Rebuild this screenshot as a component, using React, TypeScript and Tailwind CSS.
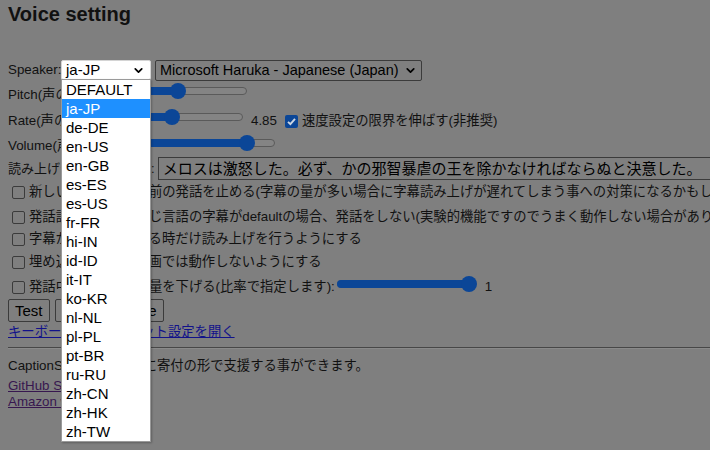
import { ChevronDown } from "lucide-react";

const FONT = "font-['Liberation_Sans','Noto_Sans_CJK_JP',sans-serif]";

const LANGS = [
  "DEFAULT",
  "ja-JP",
  "de-DE",
  "en-US",
  "en-GB",
  "es-ES",
  "es-US",
  "fr-FR",
  "hi-IN",
  "id-ID",
  "it-IT",
  "ko-KR",
  "nl-NL",
  "pl-PL",
  "pt-BR",
  "ru-RU",
  "zh-CN",
  "zh-HK",
  "zh-TW",
];

type SliderProps = {
  width: number;
  thumb: number;
  className?: string;
};

function Slider({ width, thumb, className = "" }: SliderProps) {
  return (
    <div className={`relative h-[16px] shrink-0 ${className}`} style={{ width }}>
      <div className="absolute inset-x-0 top-[4px] h-[8px] rounded-full border border-[#5a5a5a] bg-[#848484]" />
      <div className="absolute left-0 top-[4px] h-[8px] rounded-full bg-[#0b4697]" style={{ width: thumb + 4 }} />
      <div className="absolute top-0 h-[16px] w-[16px] rounded-full bg-[#0b4697]" style={{ left: thumb - 8 }} />
    </div>
  );
}

function Checkbox({ checked = false, className = "" }: { checked?: boolean; className?: string }) {
  if (checked) {
    return (
      <span className={`flex h-[13px] w-[13px] shrink-0 items-center justify-center rounded-[2px] bg-[#0b4697] ${className}`}>
        <svg width="11" height="11" viewBox="0 0 11 11">
          <path d="M2 5.8 L4.4 8.2 L9 2.8" fill="none" stroke="#cdd6e2" strokeWidth="1.9" />
        </svg>
      </span>
    );
  }
  return <span className={`block h-[13px] w-[13px] shrink-0 rounded-[2px] border border-[#3b3b3b] ${className}`} />;
}

function CheckRow({ label, className = "", children }: { label: string; className?: string; children?: React.ReactNode }) {
  return (
    <div className={`flex h-[22px] items-center whitespace-nowrap ${className}`}>
      <Checkbox className="ml-[4px]" />
      <span className="ml-[4px]">{label}</span>
      {children}
    </div>
  );
}

export default function App() {
  return (
    <div className={`relative h-[450px] w-[710px] overflow-hidden bg-[#7f7f7f] px-[8px] text-[13.33px] leading-[16px] text-[#111] ${FONT}`}>
      <div className="flex h-[28px] items-center text-[20px] font-bold">Voice setting</div>

      <div className="mt-[32px] flex h-[20px] items-center whitespace-nowrap">
        <span className="w-[53px]">Speaker:</span>
        <div className="flex h-[20px] w-[90px] items-center justify-between rounded-[2px] border border-[#d4d4d4] bg-white pl-[4px] pr-[5px] text-[15px] text-black">
          <span>ja-JP</span>
          <ChevronDown size={13} strokeWidth={3.2} />
        </div>
        <div className="ml-[4px] flex h-[21px] w-[267px] items-center justify-between rounded-[2px] border border-[#3b3b3b] pl-[4px] pr-[4px] text-[14.5px] text-black">
          <span>Microsoft Haruka - Japanese (Japan)</span>
          <ChevronDown size={13} strokeWidth={3.2} />
        </div>
      </div>

      <div className="mt-[2px] flex h-[26px] items-center whitespace-nowrap">
        <span className="w-[110px]">Pitch(声の高さ):</span>
        <Slider width={129} thumb={60} className="mb-[8px]" />
      </div>

      <div className="flex h-[26px] items-center whitespace-nowrap">
        <span className="w-[106px]">Rate(声の速さ):</span>
        <Slider width={129} thumb={58} className="mb-[8px]" />
        <span className="ml-[8px]">4.85</span>
        <Checkbox checked className="ml-[8px]" />
        <span className="ml-[4px]">速度設定の限界を伸ばす(非推奨)</span>
      </div>

      <div className="mt-[1px] flex h-[22px] items-center whitespace-nowrap">
        <span className="w-[138px]">Volume(声の大きさ):</span>
        <Slider width={129} thumb={101} className="mb-[6px]" />
      </div>

      <div className="flex h-[23px] items-center whitespace-nowrap">
        <span className="text-[13px]">読み上げテスト用の文章:</span>
        <div className="ml-[3px] flex h-[23px] w-[560px] shrink-0 items-center border border-[#3b3b3b] pl-[4px] text-[15px] text-black">
          メロスは激怒した。必ず、かの邪智暴虐の王を除かなければならぬと決意した。
        </div>
      </div>

      <CheckRow
        className="mt-[1px]"
        label="新しい字幕が来たら前の発話を止める(字幕の量が多い場合に字幕読み上げが遅れてしまう事への対策になるかもしれません)"
      />
      <CheckRow
        className="mt-[3px]"
        label="発話設定の言語と同じ言語の字幕がdefaultの場合、発話をしない(実験的機能ですのでうまく動作しない場合があります)"
      />
      <CheckRow label="字幕が表示されている時だけ読み上げを行うようにする" />
      <CheckRow className="mt-[1px]" label="埋め込まれている動画では動作しないようにする" />
      <CheckRow className="mt-[3px]" label="発話中は、動画の音量を下げる(比率で指定します):">
        <Slider width={139} thumb={132} className="mb-[6px] ml-[2px]" />
        <span className="ml-[9px]">1</span>
      </CheckRow>

      <div className="mt-[1px] flex h-[23px] items-center gap-[5px] text-[15px] text-black">
        <button className="h-[23px] rounded-[2px] border border-[#3b3b3b] px-[6px]">Test</button>
        <button className="h-[23px] w-[109px] rounded-[2px] border border-[#3b3b3b] px-[6px] text-right">Stop All Voice</button>
      </div>

      <div className="flex h-[20px] items-center">
        <a className="text-[#12128a] underline">キーボードショートカット設定を開く</a>
      </div>

      <div className="mt-[5px] w-[702px] border-t border-b border-t-[#474747] border-b-[#8a8a8a]" />

      <div className="mt-[7px] flex h-[20px] items-center whitespace-nowrap">CaptionSpeakerの開発に寄付の形で支援する事ができます。</div>
      <div className="mt-[2px] flex h-[16px] items-center">
        <a className="text-[#37174f] underline">GitHub Sponsors</a>
      </div>
      <div className="flex h-[16px] items-center">
        <a className="text-[#37174f] underline">Amazon wishlist</a>
      </div>

      <ul className="absolute left-[61px] top-[79px] w-[90px] border border-[#9a9a9a] bg-white text-[15px] text-black shadow-[1px_1px_2px_rgba(0,0,0,0.25)]">
        {LANGS.map((lang) => (
          <li
            key={lang}
            className={`flex h-[19px] items-center pl-[4px] ${lang === "ja-JP" ? "bg-[#1e90ff] text-white" : ""}`}
          >
            {lang}
          </li>
        ))}
      </ul>
    </div>
  );
}
